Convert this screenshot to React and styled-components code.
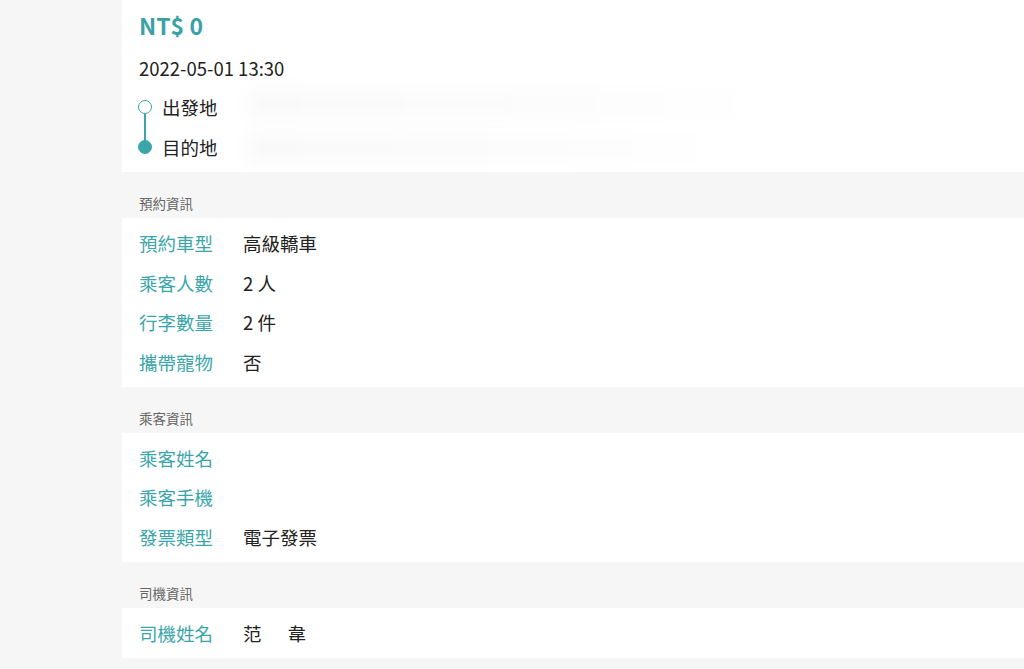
import React from "react";
import styled, { createGlobalStyle } from "styled-components";

const Global = createGlobalStyle`
  html, body { margin: 0; padding: 0; background: #f6f6f6; }
  body { font-family: "Noto Sans CJK TC", "Noto Sans", sans-serif; color: #222; }
`;

const TEAL = "#3ba6aa";

const Main = styled.main`
  margin-left: 122px;
  display: flex;
  flex-direction: column;
`;

const Panel = styled.section`
  background: #fff;
  padding: ${(p) => p.$pad || "5px 17px 5px 17px"};
  display: flex;
  flex-direction: column;
`;

const Price = styled.div`
  font-size: 23px;
  font-weight: 700;
  line-height: 34px;
  color: #3aa2a6;
`;

const DateText = styled.div`
  margin-top: 13px;
  font-size: 18.5px;
  line-height: 26px;
  color: #222;
`;

const Route = styled.div`
  margin-top: 6px;
  display: flex;
  flex-direction: column;
  position: relative;
`;

const RouteRow = styled.div`
  height: 40px;
  display: flex;
  align-items: center;
  gap: 10px;
  font-size: 18.5px;
  position: relative;
`;

const Dot = styled.span`
  width: 14px;
  height: 14px;
  margin-left: -1px;
  box-sizing: border-box;
  border-radius: 50%;
  border: 1.5px solid ${TEAL};
  background: ${(p) => (p.$filled ? TEAL : "#fff")};
  position: relative;
  z-index: 1;
  flex: none;
`;

const Connector = styled.span`
  position: absolute;
  left: 5px;
  top: 26px;
  width: 2px;
  height: 28px;
  background: ${TEAL};
`;

const Smear = styled.span`
  position: absolute;
  left: 110px;
  top: ${(p) => p.$top}px;
  width: ${(p) => p.$w}px;
  height: 30px;
  background: linear-gradient(90deg, rgba(0,0,0,0.025), rgba(0,0,0,0.012) 60%, rgba(0,0,0,0));
  filter: blur(8px);
`;

const SectionTitle = styled.div`
  height: 46px;
  box-sizing: border-box;
  padding: 22px 0 0 17px;
  font-size: 13.5px;
  line-height: 18px;
  color: #666;
`;

const Row = styled.div`
  height: 39.7px;
  display: flex;
  align-items: center;
  font-size: 18.5px;
`;

const Label = styled.span`
  width: 104px;
  flex: none;
  color: ${TEAL};
`;

const Value = styled.span`
  color: #222;
`;

const Gap = styled.span`
  display: inline-block;
  width: 26px;
`;

const sections = [
  {
    title: "預約資訊",
    rows: [
      ["預約車型", "高級轎車"],
      ["乘客人數", "2 人"],
      ["行李數量", "2 件"],
      ["攜帶寵物", "否"],
    ],
  },
  {
    title: "乘客資訊",
    rows: [
      ["乘客姓名", ""],
      ["乘客手機", ""],
      ["發票類型", "電子發票"],
    ],
  },
  {
    title: "司機資訊",
    rows: [["司機姓名", "driver"]],
  },
];

export default function App() {
  return (
    <>
      <Global />
      <Main>
        <Panel $pad="8px 17px 5px 17px">
          <Price>NT$ 0</Price>
          <DateText>2022-05-01 13:30</DateText>
          <Route>
            <Smear $top={2} $w={520} />
            <Smear $top={46} $w={480} />
            <RouteRow>
              <Dot />
              出發地
              <Connector />
            </RouteRow>
            <RouteRow>
              <Dot $filled />
              目的地
            </RouteRow>
          </Route>
        </Panel>
        {sections.map((s) => (
          <React.Fragment key={s.title}>
            <SectionTitle>{s.title}</SectionTitle>
            <Panel>
              {s.rows.map(([l, v]) => (
                <Row key={l}>
                  <Label>{l}</Label>
                  <Value>
                    {v === "driver" ? (
                      <>
                        范<Gap />韋
                      </>
                    ) : (
                      v
                    )}
                  </Value>
                </Row>
              ))}
            </Panel>
          </React.Fragment>
        ))}
      </Main>
    </>
  );
}
